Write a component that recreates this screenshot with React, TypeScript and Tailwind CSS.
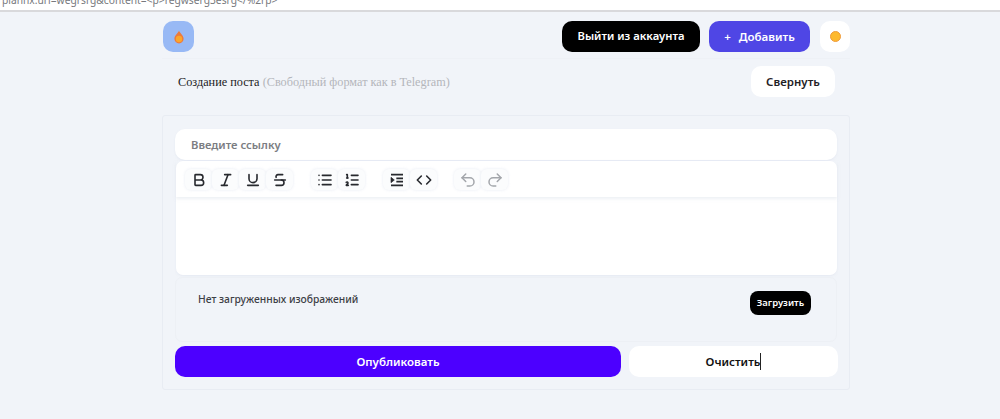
import React from "react";
import {
  Bold,
  Italic,
  Underline,
  Strikethrough,
  List,
  ListOrdered,
  Code,
  Undo2,
  Redo2,
} from "lucide-react";

const font = "font-['Noto_Sans',sans-serif]";

function IndentIcon({ className, strokeWidth }: { className?: string; strokeWidth?: number }) {
  return (
    <svg viewBox="0 0 24 24" className={className} fill="none" stroke="currentColor" strokeWidth={strokeWidth}>
      <path d="M3 4h18M11 9.500h10M11 14.500h10M3 20h18" />
      <path d="M3 8l5 4-5 4z" fill="currentColor" strokeWidth={1} />
    </svg>
  );
}

function ToolButton({
  icon: Icon,
  muted,
  size = "w-[16px] h-[16px]",
}: {
  icon: React.ComponentType<{ className?: string; strokeWidth?: number }>;
  muted?: boolean;
  size?: string;
}) {
  return (
    <div className="w-[27px] h-[21px] rounded-md bg-[#fbfcfd] shadow-[0_0_3px_rgba(225,230,240,0.8)] flex items-center justify-center">
      <Icon
        className={`${size} ${muted ? "text-[#a3a6ab]" : "text-[#27292e]"}`}
        strokeWidth={muted ? 2 : 2.4}
      />
    </div>
  );
}

export default function App() {
  return (
    <div className={`h-[419px] overflow-hidden bg-[#f1f4f9] ${font}`}>
      {/* Browser address strip */}
      <div className="h-[12px] bg-white border-b-2 border-[#d9d9dc] overflow-hidden">
        <div className="text-[10.250px] leading-[12px] -mt-[6px] ml-[2px] text-[#77797d] whitespace-nowrap">
          planhx.uri=wegrsrg&amp;content=&lt;p&gt;regwserg3esrg&lt;/%2rp&gt;
        </div>
      </div>

      <div className="w-[688px] ml-[162px]">
        {/* Header */}
        <header className="h-[47px] pt-[9px] pl-px flex items-start border-b border-[#eef1f6]">
          <div className="w-[31px] h-[31px] rounded-[10px] bg-[#98b9f5] flex items-center justify-center">
            <svg width="12" height="14" viewBox="0 0 12 14">
              <path
                d="M6 .5C6.600 3 10.600 5 10.600 8.800a4.600 4.600 0 0 1-9.200 0C1.400 5 5.400 3 6 .5z"
                fill="#ee7a3a"
              />
              <circle cx="6" cy="9" r="3.200" fill="#fba62b" />
            </svg>
          </div>
          <div className="ml-auto flex items-center">
            <button className="w-[138px] h-[31px] rounded-[10px] bg-black text-white text-[11.250px] font-semibold">
              Выйти из аккаунта
            </button>
            <button className="ml-[9px] w-[101px] h-[31px] rounded-[10px] bg-[#4f46e5] text-white text-[11.500px] font-semibold">
              <span className="mr-2">+</span>Добавить
            </button>
            <div className="ml-[10px] w-[30px] h-[31px] rounded-[10px] bg-white flex items-center justify-center">
              <div className="w-[11px] h-[11px] rounded-full bg-[#fdb92e] border border-[#f09a3a]" />
            </div>
          </div>
        </header>

        {/* Post title row */}
        <div className="h-[56px] pt-[7px] pl-[16px] pr-[15px] flex items-start">
          <div className="mt-[9px] text-[12.250px] leading-[15px] font-['Liberation_Serif',serif] text-[#1c1c1e]">
            Создание поста <span className="text-[#b4b6bb]">(Свободный формат как в Telegram)</span>
          </div>
          <button className="ml-auto w-[84px] h-[31px] rounded-[10px] bg-white text-[11.500px] font-semibold text-[#1f2126]">
            Свернуть
          </button>
        </div>

        {/* Form card */}
        <div className="h-[275px] px-[12px] pt-[13px] border border-[#e8ecf3] rounded-[3px]">
          <div className="h-[31px] pt-px rounded-[10px] bg-white pl-[16px] flex items-center text-[11.250px] font-semibold text-[#7b7d82] shadow-[0_1px_2px_rgba(225,230,240,0.7)]">
            Введите ссылку
          </div>

          <div className="mt-[1px] ml-px h-[114px] rounded-[7px] bg-white shadow-[0_1px_2px_rgba(225,230,240,0.7)]">
            <div className="h-[36px] pl-[9px] pr-[9px] pt-[8px] flex items-start shadow-[0_2px_3px_rgba(230,233,240,0.7)]">
              <div className="flex">
                <ToolButton icon={Bold} />
                <ToolButton icon={Italic} />
                <ToolButton icon={Underline} />
                <ToolButton icon={Strikethrough} />
              </div>
              <div className="flex ml-[18px]">
                <ToolButton icon={List} />
                <ToolButton icon={ListOrdered} />
              </div>
              <div className="flex ml-[18px]">
                <ToolButton icon={IndentIcon} />
                <ToolButton icon={Code} />
              </div>
              <div className="flex ml-[17px]">
                <ToolButton icon={Undo2} muted size="w-[18px] h-[18px]" />
                <ToolButton icon={Redo2} muted size="w-[18px] h-[18px]" />
              </div>
            </div>
          </div>

          {/* Upload panel */}
          <div className="mt-[2px] h-[65px] pl-[22px] pr-[25px] pt-[13px] flex items-start justify-between rounded-[7px] border border-[#edf0f5]">
            <span className="mt-px text-[10.300px] leading-[14px] font-medium text-[#3d4046]">
              Нет загруженных изображений
            </span>
            <button className="h-[24px] w-[61px] rounded-[8px] bg-black text-white text-[9.500px] font-semibold">
              Загрузить
            </button>
          </div>

          {/* Actions */}
          <div className="mt-[4px] w-[663px] flex gap-[8px]">
            <button className="w-[446px] h-[31px] rounded-[10px] bg-[#4c00ff] text-white text-[11.500px] font-semibold">
              Опубликовать
            </button>
            <button className="flex-1 h-[31px] rounded-[10px] bg-white text-[11.500px] font-semibold text-[#111] flex items-center justify-center">
              Очистить
              <span className="w-px h-[17px] bg-[#222]" />
            </button>
          </div>
        </div>
      </div>
    </div>
  );
}
